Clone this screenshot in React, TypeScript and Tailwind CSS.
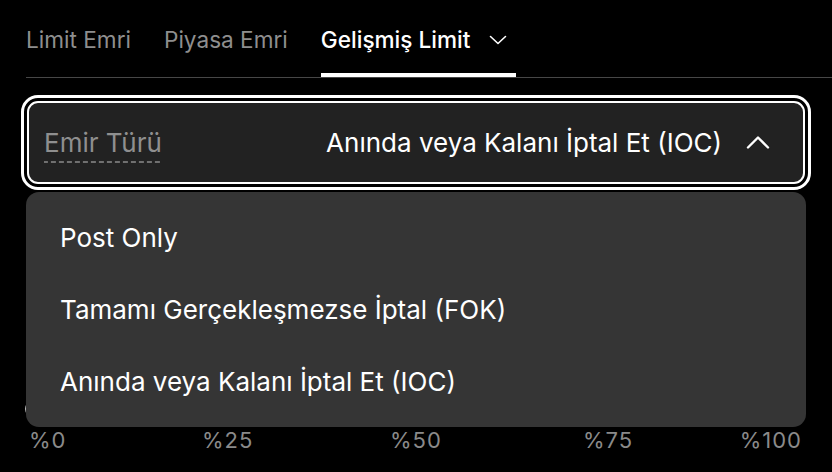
import React from "react";

function ChevronDown() {
  return (
    <svg width="18" height="10" viewBox="0 0 18 10" fill="none">
      <path d="M1.5 1.5l7.5 7 7.5-7" stroke="white" strokeWidth="1.6" strokeLinecap="round" strokeLinejoin="round" />
    </svg>
  );
}

function ChevronUp() {
  return (
    <svg width="24" height="14" viewBox="0 0 24 14" fill="none">
      <path d="M2 12.5L12 2.5l10 10" stroke="white" strokeWidth="2.4" strokeLinecap="round" strokeLinejoin="round" />
    </svg>
  );
}

export default function App() {
  const items = ["Post Only", "Tamamı Gerçekleşmezse İptal (FOK)", "Anında veya Kalanı İptal Et (IOC)"];
  return (
    <div className="w-[832px] h-[472px] bg-black relative overflow-hidden font-['Inter',sans-serif]">
      {/* Tabs */}
      <div className="ml-[26px] flex gap-[33px] border-b border-[#474747]">
        <div className="h-[77px] pt-[6px] border-b-4 border-transparent flex items-center text-[22.6px] text-[#8e8e8e]">
          Limit Emri
        </div>
        <div className="h-[77px] pt-[6px] border-b-4 border-transparent flex items-center text-[22.6px] text-[#8e8e8e]">
          Piyasa Emri
        </div>
        <div className="w-[195px] h-[77px] pt-[6px] border-b-4 border-white flex items-center text-[22.6px] text-white font-medium">
          <span>Gelişmiş Limit</span>
          <span className="ml-[19px] mt-[1px]">
            <ChevronDown />
          </span>
        </div>
      </div>

      {/* Select */}
      <div className="pl-[27px] pr-[27px] mt-[23px]">
        <div className="h-[83px] rounded-[11px] border-2 border-white bg-[#222222] outline-3 outline-white outline-offset-[3px] flex items-center pl-[15px] pr-[33px]">
          <span className="text-[26px] text-[#8f8f8f] leading-[30px] pb-[5px] mt-[5px] bg-[linear-gradient(to_right,#707070_5px,transparent_5px)] bg-[length:8px_2px] bg-repeat-x bg-bottom">
            Emir Türü
          </span>
          <span className="ml-auto text-[26px] text-white">Anında veya Kalanı İptal Et (IOC)</span>
          <span className="ml-[24px] mb-[2px]">
            <ChevronUp />
          </span>
        </div>
      </div>

      {/* Hidden form content behind dropdown */}
      <div className="h-[217px]" />
      <div className="px-[26px] h-[16px] flex items-center">
        <div className="w-[16px] h-[16px] rounded-full bg-[#bdbdbd] -ml-[1px]" />
        <div className="flex-1 h-[2px] bg-[#444]" />
      </div>
      <div className="pl-[29px] pr-[30px] mt-[7px] flex text-[22px] tracking-[1px] text-[#8a8a8a]">
        <span className="w-[173px]">%0</span>
        <span className="w-[188px]">%25</span>
        <span className="w-[193px]">%50</span>
        <span>%75</span>
        <span className="ml-auto">%100</span>
      </div>

      {/* Dropdown menu */}
      <div className="absolute left-[26px] top-[192px] w-[780px] h-[235px] bg-[#353535] rounded-[13px] pt-[9px] px-[34px]">
        {items.map((t) => (
          <div key={t} className="h-[72px] flex items-center text-[26px] text-white">
            {t}
          </div>
        ))}
      </div>
    </div>
  );
}
